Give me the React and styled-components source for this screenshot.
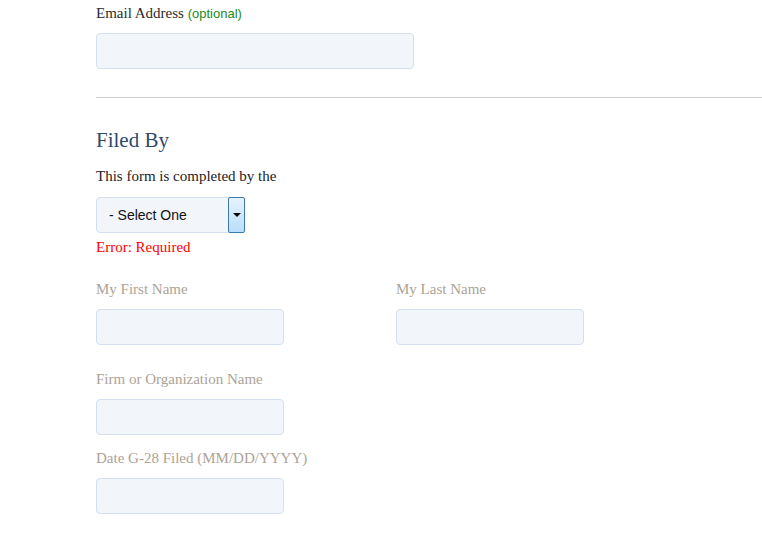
import React from 'react'
import styled, { createGlobalStyle } from 'styled-components'

const GlobalStyle = createGlobalStyle`
  html, body {
    margin: 0;
    padding: 0;
    background: #fff;
  }
  body {
    font-family: "Liberation Serif", Georgia, serif;
  }
`

const Page = styled.div`
  padding: 5px 0 20px 96px;
`

const Field = styled.div`
  margin-bottom: ${p => p.$gap || 0}px;
`

const Label = styled.label`
  display: block;
  font-size: 15px;
  line-height: 17px;
  color: ${p => (p.$muted ? '#aca396' : '#2b2b2b')};
  margin-bottom: 11px;
`

const Optional = styled.span`
  font-family: "Liberation Sans", Arial, sans-serif;
  font-size: 13px;
  color: #1a8a1a;
`

const Input = styled.div`
  box-sizing: border-box;
  width: ${p => p.$width}px;
  height: 36px;
  background: #f2f5fa;
  border: 1px solid #d4e0ef;
  border-radius: 4px;
`

const Rule = styled.hr`
  border: 0;
  border-top: 1px solid #cccccc;
  margin: 28px 0 30px;
`

const Heading = styled.h2`
  margin: 0 0 16px;
  font-size: 21px;
  line-height: 24px;
  font-weight: normal;
  color: #2d4a6c;
`

const Hint = styled.p`
  margin: 0 0 12px;
  font-size: 15px;
  line-height: 17px;
  color: #222;
`

const Select = styled.div`
  box-sizing: border-box;
  width: 149px;
  height: 36px;
  display: flex;
  align-items: center;
  background: #f2f5fa;
  border: 1px solid #d4e0ef;
  border-radius: 4px;
  padding-left: 12px;
  font-family: "Liberation Sans", Arial, sans-serif;
  font-size: 14px;
  color: #111;
`

const SelectText = styled.span`
  flex: 1;
`

const Arrow = styled.span`
  box-sizing: border-box;
  width: 17px;
  height: 36px;
  margin: -1px -1px -1px 0;
  border: 1px solid #3d7bad;
  border-radius: 2px;
  background: linear-gradient(#e6f3fb, #b9defa);
  display: flex;
  align-items: center;
  justify-content: center;

  &::after {
    content: '';
    border-left: 4px solid transparent;
    border-right: 4px solid transparent;
    border-top: 4px solid #000;
  }
`

const Error = styled.div`
  margin: 6px 0 25px;
  font-size: 15px;
  line-height: 17px;
  color: #ff0000;
`

const Row = styled.div`
  display: flex;
  gap: 112px;
  margin-bottom: 26px;
`

export default function App() {
  return (
    <Page>
      <GlobalStyle />
      <Field>
        <Label>
          Email Address <Optional>(optional)</Optional>
        </Label>
        <Input $width={318} />
      </Field>

      <Rule />

      <Heading>Filed By</Heading>
      <Hint>This form is completed by the</Hint>
      <Select>
        <SelectText>- Select One</SelectText>
        <Arrow />
      </Select>
      <Error>Error: Required</Error>

      <Row>
        <Field>
          <Label $muted>My First Name</Label>
          <Input $width={188} />
        </Field>
        <Field>
          <Label $muted>My Last Name</Label>
          <Input $width={188} />
        </Field>
      </Row>

      <Field $gap={15}>
        <Label $muted>Firm or Organization Name</Label>
        <Input $width={188} />
      </Field>

      <Field>
        <Label $muted>Date G-28 Filed (MM/DD/YYYY)</Label>
        <Input $width={188} />
      </Field>
    </Page>
  )
}
